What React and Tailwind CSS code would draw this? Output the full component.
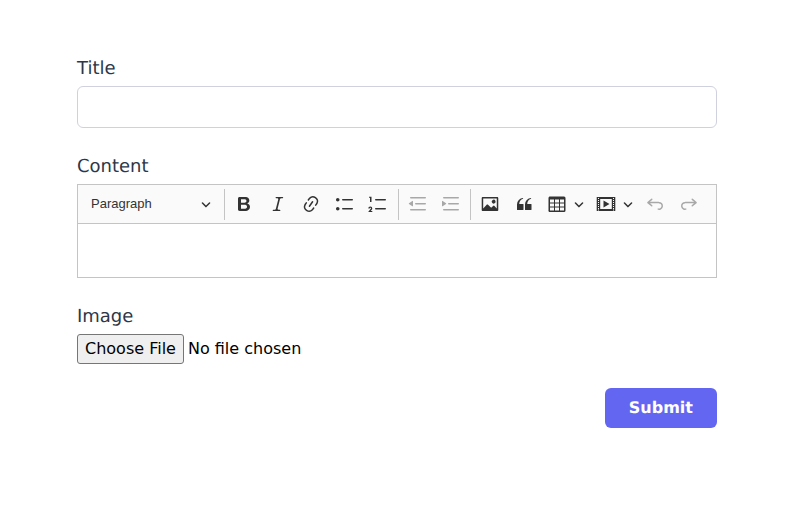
const ICONS = {
  bold: "M10.187 17H5.773c-.637 0-1.092-.138-1.364-.415-.273-.277-.409-.718-.409-1.323V4.738c0-.617.14-1.062.419-1.332.279-.27.73-.406 1.354-.406h4.68c.69 0 1.288.041 1.793.124.506.083.96.242 1.36.478.341.197.644.447.906.75a3.262 3.262 0 0 1 .808 2.162c0 1.401-.722 2.426-2.167 3.075C15.05 10.175 16 11.315 16 13.01a3.756 3.756 0 0 1-2.296 3.504 6.1 6.1 0 0 1-1.517.377c-.571.073-1.238.11-2 .11zm-.217-6.217H7v4.087h3.069c1.977 0 2.965-.69 2.965-2.072 0-.707-.256-1.22-.768-1.537-.512-.319-1.277-.478-2.296-.478zM7 5.13v3.619h2.606c.729 0 1.292-.067 1.69-.2a1.6 1.6 0 0 0 .91-.765c.165-.267.247-.566.247-.897 0-.707-.26-1.176-.778-1.409-.519-.232-1.31-.348-2.375-.348H7z",
  italic: "m9.586 14.633.021.004c-.036.335.095.655.393.962.082.083.173.15.274.201h1.474a.6.6 0 1 1 0 1.2H5.304a.6.6 0 0 1 0-1.2h1.15c.474-.07.809-.182 1.005-.334.157-.122.291-.32.404-.597l2.416-9.55a1.053 1.053 0 0 0-.281-.823 1.12 1.12 0 0 0-.442-.296H8.15a.6.6 0 0 1 0-1.2h6.443a.6.6 0 1 1 0 1.2h-1.195c-.376.056-.65.155-.823.296-.215.175-.423.439-.623.79l-2.366 9.347z",
  link: "m11.077 15 .991-1.416a.75.75 0 1 1 1.229.86l-1.148 1.64a.748.748 0 0 1-.217.206 5.251 5.251 0 0 1-8.503-5.955.741.741 0 0 1 .12-.274l1.147-1.639a.75.75 0 1 1 1.228.86L4.933 10.7l.006.003a3.75 3.75 0 0 0 6.132 4.294l.006.004zm5.494-5.335a.748.748 0 0 1-.12.274l-1.147 1.639a.75.75 0 1 1-1.228-.86l.86-1.23a3.75 3.75 0 0 0-6.144-4.301l-.86 1.229a.75.75 0 0 1-1.229-.86l1.148-1.64a.748.748 0 0 1 .217-.206 5.251 5.251 0 0 1 8.503 5.955zm-4.563-2.532a.75.75 0 0 1 .184 1.045l-3.155 4.505a.75.75 0 1 1-1.229-.86l3.155-4.506a.75.75 0 0 1 1.045-.184z",
  bullet: "M7 5.75c0 .414.336.75.75.75h9.5a.75.75 0 1 0 0-1.5h-9.5a.75.75 0 0 0-.75.75zm-6 0C1 4.784 1.777 4 2.75 4c.966 0 1.75.777 1.75 1.75 0 .966-.777 1.75-1.75 1.75C1.784 7.5 1 6.723 1 5.75zm6 9c0 .414.336.75.75.75h9.5a.75.75 0 1 0 0-1.5h-9.5a.75.75 0 0 0-.75.75zm-6 0c0-.966.777-1.75 1.75-1.75.966 0 1.75.777 1.75 1.75 0 .966-.777 1.75-1.75 1.75-.966 0-1.75-.777-1.75-1.75z",
  numbered: "M7 5.75c0 .414.336.75.75.75h9.5a.75.75 0 1 0 0-1.5h-9.5a.75.75 0 0 0-.75.75zM3.5 3v5H2V3.7H1v-1h2.5V3zM.343 17.857l2.59-3.257H2.92a.6.6 0 1 0-1.04 0H.302a2 2 0 1 1 3.995 0h-.001c-.048.405-.16.734-.333.988-.175.254-.59.692-1.244 1.312H4.3v1h-4l.043-.043zM7 14.75a.75.75 0 0 1 .75-.75h9.5a.75.75 0 1 1 0 1.5h-9.5a.75.75 0 0 1-.75-.75z",
  outdent: "M2 3.75c0 .414.336.75.75.75h14.5a.75.75 0 1 0 0-1.5H2.75a.75.75 0 0 0-.75.75zm5 6c0 .414.336.75.75.75h9.5a.75.75 0 1 0 0-1.5h-9.5a.75.75 0 0 0-.75.75zM2.75 16.5h14.5a.75.75 0 1 0 0-1.5H2.75a.75.75 0 1 0 0 1.5zm1.618-9.55L.98 9.358a.4.4 0 0 0 .013.661l3.39 2.207A.4.4 0 0 0 5 11.892V7.275a.4.4 0 0 0-.632-.326z",
  indent: "M2 3.75c0 .414.336.75.75.75h14.5a.75.75 0 1 0 0-1.5H2.75a.75.75 0 0 0-.75.75zm5 6c0 .414.336.75.75.75h9.5a.75.75 0 1 0 0-1.5h-9.5a.75.75 0 0 0-.75.75zM2.75 16.5h14.5a.75.75 0 1 0 0-1.5H2.75a.75.75 0 1 0 0 1.5zM1.632 6.95 5.02 9.358a.4.4 0 0 1-.013.661l-3.39 2.207A.4.4 0 0 1 1 11.892V7.275a.4.4 0 0 1 .632-.326z",
  image: "M6.91 10.54c.26-.23.64-.21.88.03l3.36 3.14 2.23-2.06a.64.64 0 0 1 .87 0l2.52 2.97V4.5H3.2v10.12l3.71-4.08zm10.27-7.51c.6 0 1.09.47 1.09 1.05v11.84c0 .59-.49 1.06-1.09 1.06H2.79c-.6 0-1.09-.47-1.09-1.06V4.08c0-.58.49-1.05 1.1-1.05h14.38zm-5.22 5.56a1.96 1.96 0 1 1 3.4-1.96 1.96 1.96 0 0 1-3.4 1.96z",
  quote: "M3 10.423a6.5 6.5 0 0 1 6.056-6.408l.038.67C6.448 5.423 5.354 7.663 5.22 10H9c.552 0 .5.432.5.986v4.511c0 .554-.448.503-1 .503h-5c-.552 0-.5-.449-.5-1.003v-4.574zm8 0a6.5 6.5 0 0 1 6.056-6.408l.038.67c-2.646.739-3.74 2.979-3.873 5.315H17c.552 0 .5.432.5.986v4.511c0 .554-.448.503-1 .503h-5c-.552 0-.5-.449-.5-1.003v-4.574z",
  table: "M3 5.5v3h4v-3H3zm0 4v3h4v-3H3zm0 4v3h4v-3H3zm5 3h4v-3H8v3zm5 0h4v-3h-4v3zm4-4v-3h-4v3h4zm0-4v-3h-4v3h4zm1.5 8a1.5 1.5 0 0 1-1.5 1.5H3A1.5 1.5 0 0 1 1.5 16V4c0-.833.667-1.5 1.5-1.5h14A1.5 1.5 0 0 1 18.5 4v12zM8 8.5h4v-3H8v3zm0 4h4v-3H8v3z",
  media: "M1.3 3h17.4c.6 0 .6 0 .6.6v12.8c0 .6 0 .6-.6.6H1.3c-.6 0-.6 0-.6-.6V3.6c0-.6 0-.6.6-.6zM4.2 5v10h11.6V5H4.2zM2 4v1h1V4H2zm0 2v1h1V6H2zm0 2v1h1V8H2zm0 2v1h1v-1H2zm0 2v1h1v-1H2zm0 2v1h1v-1H2zm0 1.5v1h1v-1H2zM17 4v1h1V4h-1zm0 2v1h1V6h-1zm0 2v1h1V8h-1zm0 2v1h1v-1h-1zm0 2v1h1v-1h-1zm0 2v1h1v-1h-1zm0 1.5v1h1v-1h-1zM7.5 6.6v6.8l6-3.4-6-3.4z",
  undo: "m5.042 9.367 2.189 1.837a.75.75 0 0 1-.965 1.149l-3.788-3.18a.747.747 0 0 1-.21-.284.75.75 0 0 1 .17-.945L6.23 4.762a.75.75 0 1 1 .964 1.15L4.863 7.866h8.917A.75.75 0 0 1 14 7.9a4 4 0 1 1-1.477 7.718l.344-1.489a2.5 2.5 0 1 0 1.094-4.73l.008-.032H5.042z",
  redo: "m14.958 9.367-2.189 1.837a.75.75 0 0 0 .965 1.149l3.788-3.18a.747.747 0 0 0 .21-.284.75.75 0 0 0-.17-.945L13.77 4.762a.75.75 0 1 0-.964 1.15l2.331 1.955H6.22A.75.75 0 0 0 6 7.9a4 4 0 1 0 1.477 7.718l-.344-1.489A2.5 2.5 0 1 1 6.039 9.4l-.008-.032h8.927z",
};

function Icon({ name, off }) {
  return (
    <svg viewBox="0 0 20 20" className={`w-5 h-5 ${off ? "text-[#a8a8a8]" : "text-[#333333]"}`} fill="currentColor" fillRule="evenodd">
      <path d={ICONS[name]} />
    </svg>
  );
}

function Arrow() {
  return (
    <svg viewBox="0 0 10 10" className="w-[10px] h-[10px] text-[#333333]" fill="currentColor">
      <path d="M.941 4.523a.75.75 0 1 1 1.06-1.06l3.006 3.005 3.005-3.005a.75.75 0 1 1 1.06 1.06l-3.549 3.55a.75.75 0 0 1-1.168-.136L.941 4.523z" />
    </svg>
  );
}

function Btn({ name, off }) {
  return (
    <div className="w-[33.5px] h-[30px] flex items-center justify-center">
      <Icon name={name} off={off} />
    </div>
  );
}

function SplitBtn({ name }) {
  return (
    <div className="h-[30px] flex items-center w-[49px]">
      <div className="w-[33px] flex justify-center"><Icon name={name} /></div>
      <div className="w-[10px] ml-[1px]"><Arrow /></div>
    </div>
  );
}

function Sep({ left }) {
  return <div className={`w-px h-[31px] bg-[#c4c4c4] mr-[2.25px] ${left}`} />;
}

const labelCls = "block text-lg leading-7 text-[#2d3748] [text-rendering:geometricPrecision]";

export default function App() {
  return (
    <div className="min-h-[512px] bg-white font-['DejaVu_Sans',sans-serif] pt-[55px]">
      <form className="w-[640px] ml-[77px]">
        <label className={`${labelCls} mb-[3px]`}>Title</label>
        <input type="text" className="block w-full h-[42px] border border-[#d0d1de] rounded-md bg-white" />

        <label className={`${labelCls} mt-[25px] mb-[3px]`}>Content</label>
        <div className="border border-[#c4c4c4] h-[94px] flex flex-col">
          <div className="h-[39px] shrink-0 bg-[#fafafa] border-b border-[#c4c4c4] flex items-center font-['Liberation_Sans',sans-serif]">
            <div className="w-[146px] flex items-center justify-between pl-[13px] pr-[13px] h-[30px] text-[13px] text-[#333333]">
              <span>Paragraph</span>
              <Arrow />
            </div>
            <Sep left="ml-0" />
            <Btn name="bold" />
            <Btn name="italic" />
            <Btn name="link" />
            <Btn name="bullet" />
            <Btn name="numbered" />
            <Sep left="ml-[3px]" />
            <Btn name="outdent" off />
            <Btn name="indent" off />
            <Sep left="ml-[2px]" />
            <Btn name="image" />
            <Btn name="quote" />
            <SplitBtn name="table" />
            <SplitBtn name="media" />
            <Btn name="undo" off />
            <Btn name="redo" off />
          </div>
          <div className="flex-1 bg-white" />
        </div>

        <label className={`${labelCls} mt-[25px] mb-[3px]`}>Image</label>
        <input
          type="file"
          className="block text-base text-black file:h-[30px] file:px-[7px] file:mr-[4px] file:bg-[#efefef] file:border file:border-solid file:border-[#767676] file:rounded-[3px] file:text-black"
        />

        <div className="flex justify-end mt-[24px]">
          <button type="button" className="h-10 px-6 rounded-md bg-[#6366f1] text-white font-bold text-base [text-rendering:geometricPrecision]">
            Submit
          </button>
        </div>
      </form>
    </div>
  );
}
